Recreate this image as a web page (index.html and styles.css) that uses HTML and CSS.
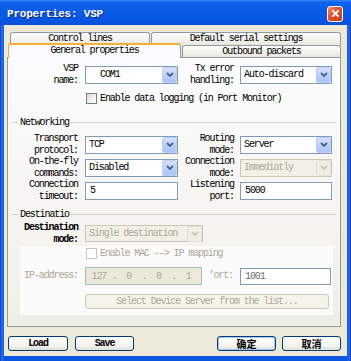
FILE: index.html
```html
<!DOCTYPE html>
<html lang="en">
  <head>
    <meta charset="UTF-8" />
    <title>Properties: VSP</title>
    <link rel="stylesheet" href="styles.css">
  </head>
  <body>
    <div class="window">
      <!-- Title Bar -->
      <div class="title-bar">
        <span class="title-text">Properties: VSP</span>
        <div class="close-btn">
          <svg viewBox="0 0 10 10"><path d="M2.2 2.2l5.6 5.6M7.8 2.2l-5.6 5.6"/></svg>
        </div>
      </div>

      <div class="client">
        <!-- Tabs -->
        <div class="tab-row back">
          <div class="tab tab-control">Control lines</div>
          <div class="tab tab-default">Default serial settings</div>
        </div>
        <div class="tab-row front">
          <div class="tab tab-general active">General properties</div>
          <div class="tab tab-outbound">Outbound packets</div>
        </div>

        <!-- General Properties Page -->
        <div class="tab-panel">
          <div class="form-grid">
            <div class="field-label">VSP<br>name:</div>
            <div class="select"><span class="value com">COM1</span><i class="arrow"><svg viewBox="0 0 8 5"><path d="M1 1l3 3 3-3"/></svg></i></div>
            <div class="field-label right">Tx error<br>handling:</div>
            <div class="select"><span class="value">Auto-discard</span><i class="arrow"><svg viewBox="0 0 8 5"><path d="M1 1l3 3 3-3"/></svg></i></div>
          </div>

          <div class="check-row">
            <span class="checkbox"></span>
            <span>Enable data logging (in Port Monitor)</span>
          </div>

          <!-- Networking -->
          <div class="group-title"><span>Networking</span></div>
          <div class="form-grid net-grid">
            <div class="field-label">Transport<br>protocol:</div>
            <div class="select"><span class="value">TCP</span><i class="arrow"><svg viewBox="0 0 8 5"><path d="M1 1l3 3 3-3"/></svg></i></div>
            <div class="field-label right">Routing<br>mode:</div>
            <div class="select"><span class="value">Server</span><i class="arrow"><svg viewBox="0 0 8 5"><path d="M1 1l3 3 3-3"/></svg></i></div>

            <div class="field-label">On-the-fly<br>commands:</div>
            <div class="select"><span class="value">Disabled</span><i class="arrow"><svg viewBox="0 0 8 5"><path d="M1 1l3 3 3-3"/></svg></i></div>
            <div class="field-label right">Connection<br>mode:</div>
            <div class="select disabled"><span class="value">Immediatly</span><i class="arrow"><svg viewBox="0 0 8 5"><path d="M1 1l3 3 3-3"/></svg></i></div>

            <div class="field-label">Connection<br>timeout:</div>
            <div class="text-input">5</div>
            <div class="field-label right">Listening<br>port:</div>
            <div class="text-input">5000</div>
          </div>

          <!-- Destination -->
          <div class="group-title dest-title"><span>Destinatio</span></div>
          <div class="form-grid dest-grid">
            <div class="field-label bold">Destination<br>mode:</div>
            <div class="select disabled wide"><span class="value">Single destination</span><i class="arrow"><svg viewBox="0 0 8 5"><path d="M1 1l3 3 3-3"/></svg></i></div>
          </div>

          <div class="sub-panel">
            <div class="check-row sub-check muted">
              <span class="checkbox off"></span>
              <span>Enable MAC --&gt; IP mapping</span>
            </div>
            <div class="ip-row">
              <div class="field-label muted">IP-address:</div>
              <div class="ip-field">
                <span class="seg">127</span><span class="dot">.</span>
                <span class="seg">0</span><span class="dot">.</span>
                <span class="seg">0</span><span class="dot">.</span>
                <span class="seg">1</span>
              </div>
              <div class="field-label muted">'ort:</div>
              <div class="text-input port">1001</div>
            </div>
            <div class="flat-btn">Select Device Server from the list...</div>
          </div>
        </div>

        <!-- Dialog Buttons -->
        <div class="button-bar">
          <div class="btn">Load</div>
          <div class="btn save">Save</div>
          <div class="btn cjk default">确定</div>
          <div class="btn cjk cancel">取消</div>
        </div>
      </div>
    </div>
  </body>
</html>
```

FILE: styles.css
```css
* {
  margin: 0;
  padding: 0;
  box-sizing: border-box;
}

body {
  width: 351px;
  height: 361px;
  overflow: hidden;
  background: #fff;
  color: #000;
  font-family: "Liberation Mono", "DejaVu Sans Mono", monospace;
  font-size: 10px;
  letter-spacing: -1.1px;
}

/* Window Frame */
.window {
  width: 351px;
  height: 361px;
  display: flex;
  flex-direction: column;
  background: linear-gradient(to right, #0b3dc4, #2a74f0 2px, #0a55e0 4px, #0a55e0 347px, #2a6cea 349px, #0a3cc0);
  padding: 0 4px 5px;
}

.title-bar {
  height: 25px;
  margin: 0 -4px;
  display: flex;
  align-items: center;
  padding: 0 8px 0 7px;
  background: linear-gradient(to bottom, #2f86f8 0%, #0d62ea 10%, #0a5be6 45%, #0656e2 80%, #0a4fd6 100%);
}

.title-text {
  color: #fff;
  font-weight: bold;
  font-size: 11px;
  letter-spacing: -0.2px;
  text-shadow: 1px 1px 0 #0a2a90;
  padding-top: 2px;
}

.close-btn {
  margin-left: auto;
  width: 16px;
  height: 16px;
  border: 1px solid #fff;
  border-radius: 3px;
  background: linear-gradient(135deg, #f08a6c, #e0502c 45%, #c83a18);
  display: flex;
  align-items: center;
  justify-content: center;
  margin-top: 2px;
}

.close-btn svg {
  width: 11px;
  height: 11px;
  stroke: #fff;
  stroke-width: 1.8;
}

/* Dialog Client Area */
.client {
  flex: 1;
  background: #ece9d8;
  padding-top: 7px;
  display: flex;
  flex-direction: column;
}

/* Tabs */
.tab-row {
  display: flex;
  height: 13px;
}

.tab-row.back {
  margin-left: 6px;
}

.tab-row.front {
  margin-left: 4px;
  height: 12px;
}

.tab {
  border: 1px solid #919b9c;
  border-bottom: none;
  border-radius: 3px 3px 0 0;
  background: linear-gradient(#fefefe, #f2f1ec 60%, #e6e5de);
  text-align: center;
  line-height: 12px;
}

.tab-control {
  width: 140px;
}

.tab-default {
  width: 190px;
  margin-left: 1px;
}

.tab-general {
  width: 173px;
}

.tab-outbound {
  width: 159px;
  margin-left: 1px;
}

.tab.active {
  margin-top: -2px;
  height: 15px;
  background: #fcfcfe;
  border-top: 2px solid #f3b13c;
  border-left-color: #e8a850;
  position: relative;
  z-index: 1;
  line-height: 12px;
}

.tab-panel {
  margin-left: 3px;
  width: 334px;
  height: 270px;
  border: 1px solid #919b9c;
  background: linear-gradient(#fcfcfe, #f4f3ee 70%, #efeee6);
  padding-top: 5px;
}

/* Form rows */
.form-grid {
  display: grid;
  grid-template-columns: 77px 93px 62px 92px;
  grid-auto-rows: 23px;
  align-items: center;
}

.field-label {
  text-align: right;
  padding-right: 7px;
  line-height: 12px;
}

.field-label.right {
  padding-right: 6px;
}

.field-label.bold {
  font-weight: bold;
}

.select {
  height: 18px;
  border: 1px solid #7f9db9;
  background: #fff;
  display: flex;
  align-items: center;
  padding-left: 3px;
}

.select .value {
  flex: 1;
  white-space: nowrap;
  overflow: hidden;
}

.select .value.com {
  padding-left: 11px;
}

.select .arrow {
  width: 15px;
  height: 16px;
  border: 1px solid #bccdf9;
  border-radius: 2px;
  background: linear-gradient(#d5e1fd, #b9cdf7 60%, #adc3f5);
  display: flex;
  align-items: center;
  justify-content: center;
}

.select .arrow svg {
  width: 8px;
  height: 5px;
  fill: none;
  stroke: #4d6185;
  stroke-width: 1.8;
}

.select.disabled {
  border-color: #c9c7ba;
  background: #f2f0e6;
  color: #aca899;
}

.select.disabled .arrow {
  border-color: #e2e0d6;
  background: #efede4;
}

.select.disabled .arrow svg {
  stroke: #c9c7ba;
}

.select.wide {
  grid-column: span 2;
  width: 118px;
  height: 17px;
}

.text-input {
  height: 18px;
  border: 1px solid #7f9db9;
  background: #fff;
  padding-left: 4px;
  line-height: 16px;
}

/* Checkboxes */
.check-row {
  display: flex;
  align-items: center;
  gap: 3px;
  margin: 7px 0 0 78px;
  height: 11px;
}

.checkbox {
  width: 11px;
  height: 11px;
  border: 1px solid #6f7f8f;
  background: linear-gradient(135deg, #dcdcd5, #f4f4f0 70%, #fff);
}

.checkbox.off {
  border-color: #cac8bb;
  background: #fff;
}

/* Group titles */
.group-title {
  display: flex;
  align-items: center;
  gap: 2px;
  height: 12px;
  margin: 12px 4px 0 4px;
}

.group-title::before {
  content: "";
  width: 6px;
  border-top: 1px solid #d0d0bf;
}

.group-title::after {
  content: "";
  flex: 1;
  border-top: 1px solid #d0d0bf;
}

.net-grid {
  margin-top: 5px;
}

.dest-title {
  margin-top: 6px;
}

.dest-grid {
  margin-top: 2px;
}

/* Destination sub panel */
.sub-panel {
  margin: 1px 0 0 12px;
  width: 313px;
  height: 69px;
  background: #fbfbf9;
  padding-top: 2px;
}

.muted {
  color: #aca899;
}

.check-row.sub-check {
  margin: 0 0 0 66px;
  height: 10px;
}

.ip-row {
  display: grid;
  grid-template-columns: 65px 117px 38px 91px;
  align-items: center;
  height: 18px;
  margin-top: 9px;
}

.ip-field {
  height: 18px;
  border: 1px solid #a5b7cc;
  background: #ece9d8;
  color: #aca899;
  display: flex;
  align-items: center;
}

.ip-field .seg {
  flex: 1;
  text-align: center;
}

.ip-field .dot {
  width: 4px;
  text-align: center;
}

.text-input.port {
  height: 17px;
  color: #6f6f6f;
  line-height: 15px;
}

.flat-btn {
  margin: 9px 0 0 65px;
  width: 244px;
  height: 15px;
  border: 1px solid #c9c7ba;
  border-radius: 3px;
  background: #f5f4ea;
  color: #aca899;
  text-align: center;
  line-height: 13px;
}

/* Bottom buttons */
.button-bar {
  display: flex;
  height: 15px;
  margin-top: 9px;
  padding: 0 6px 0 4px;
}

.btn {
  width: 60px;
  height: 15px;
  border: 1px solid #003c74;
  border-radius: 3px;
  background: linear-gradient(#fff, #f3f2ee 70%, #e2ddd2);
  font-weight: bold;
  text-align: center;
  line-height: 13px;
}

.btn.save {
  width: 59px;
  margin-left: 7px;
}

.btn.cjk {
  width: 59px;
  font-family: "Noto Sans CJK SC", sans-serif;
  font-size: 10px;
  letter-spacing: 0;
}

.btn.default {
  margin-left: auto;
  box-shadow: inset 0 0 0 1px #a9c3f4;
}

.btn.cancel {
  margin-left: 6px;
}
```
